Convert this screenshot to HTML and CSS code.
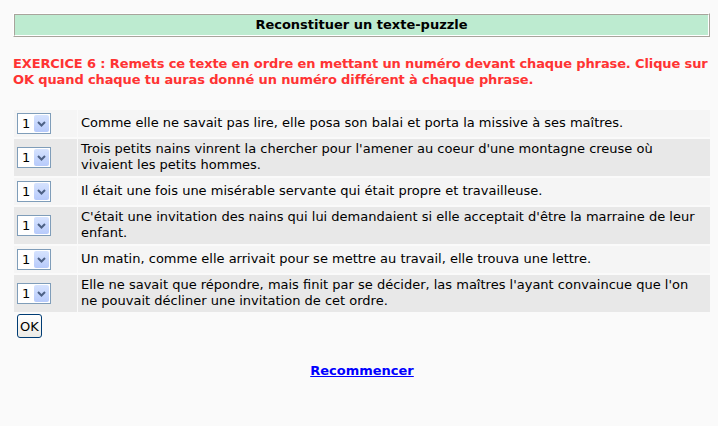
FILE: index.html
```html
<!DOCTYPE html>
<html lang="fr">
<head>
<meta charset="utf-8">
<title>Reconstituer un texte-puzzle</title>
<link rel="stylesheet" href="styles.css">
</head>
<body>
<div class="title-outer"><div class="title-cell">Reconstituer un texte-puzzle</div></div>
<p class="consigne">EXERCICE 6 : Remets ce texte en ordre en mettant un numéro devant chaque phrase. Clique sur OK quand chaque tu auras donné un numéro différent à chaque phrase.</p>
<table class="puzzle">
<tr class="light"><td class="num"><span class="sel"><span class="val">1</span><span class="btn"><svg width="9" height="6" viewBox="0 0 9 6"><path d="M1 1 L4.5 4.5 L8 1" fill="none" stroke="#4d6185" stroke-width="2"/></svg></span></span></td><td class="txt">Comme elle ne savait pas lire, elle posa son balai et porta la missive à ses maîtres.</td></tr>
<tr class="dark"><td class="num"><span class="sel"><span class="val">1</span><span class="btn"><svg width="9" height="6" viewBox="0 0 9 6"><path d="M1 1 L4.5 4.5 L8 1" fill="none" stroke="#4d6185" stroke-width="2"/></svg></span></span></td><td class="txt">Trois petits nains vinrent la chercher pour l'amener au coeur d'une montagne creuse où vivaient les petits hommes.</td></tr>
<tr class="light"><td class="num"><span class="sel"><span class="val">1</span><span class="btn"><svg width="9" height="6" viewBox="0 0 9 6"><path d="M1 1 L4.5 4.5 L8 1" fill="none" stroke="#4d6185" stroke-width="2"/></svg></span></span></td><td class="txt">Il était une fois une misérable servante qui était propre et travailleuse.</td></tr>
<tr class="dark"><td class="num"><span class="sel"><span class="val">1</span><span class="btn"><svg width="9" height="6" viewBox="0 0 9 6"><path d="M1 1 L4.5 4.5 L8 1" fill="none" stroke="#4d6185" stroke-width="2"/></svg></span></span></td><td class="txt">C'était une invitation des nains qui lui demandaient si elle acceptait d'être la marraine de leur enfant.</td></tr>
<tr class="light"><td class="num"><span class="sel"><span class="val">1</span><span class="btn"><svg width="9" height="6" viewBox="0 0 9 6"><path d="M1 1 L4.5 4.5 L8 1" fill="none" stroke="#4d6185" stroke-width="2"/></svg></span></span></td><td class="txt">Un matin, comme elle arrivait pour se mettre au travail, elle trouva une lettre.</td></tr>
<tr class="dark"><td class="num"><span class="sel"><span class="val">1</span><span class="btn"><svg width="9" height="6" viewBox="0 0 9 6"><path d="M1 1 L4.5 4.5 L8 1" fill="none" stroke="#4d6185" stroke-width="2"/></svg></span></span></td><td class="txt">Elle ne savait que répondre, mais finit par se décider, las maîtres l'ayant convaincue que l'on ne pouvait décliner une invitation de cet ordre.</td></tr>
</table>
<div class="ok-row"><button class="ok">OK</button></div>
<div class="restart"><a href="#">Recommencer</a></div>
</body>
</html>
```
FILE: styles.css
```css
html, body {
  margin: 0;
  background: #fafafa;
}
body {
  padding: 13px 4px 0 13px;
  font-family: "DejaVu Sans", Verdana, sans-serif;
  font-size: 13px;
  color: #000;
}
.title-outer {
  border: 1px solid;
  border-color: #ffffff #a8a49c #a8a49c #ffffff;
  width: 695px;
}
.title-cell {
  border: 1px solid;
  border-color: #a8a49c #ffffff #ffffff #a8a49c;
  background: #bdebd0;
  text-align: center;
  font-weight: bold;
  height: 20px;
  line-height: 20px;
}
.consigne {
  margin: 19px 0 0 0;
  color: #ff3333;
  font-weight: bold;
  font-size: 13px;
  line-height: 16px;
  letter-spacing: -0.12px;
}
.puzzle {
  border-collapse: separate;
  border-spacing: 1px 2px;
  margin: 20px 0 0 0;
  width: 698px;
}
.puzzle td {
  padding: 0;
  vertical-align: middle;
}
.light td { background: #f5f5f5; }
.dark td { background: #e8e8e8; }
.num {
  width: 60px;
  height: 27px;
  padding-left: 3px !important;
}
.txt {
  padding: 2px 3px 3px 3px !important;
  line-height: 16px;
}
.sel {
  display: flex;
  align-items: center;
  width: 32px;
  height: 19px;
  border: 1px solid #7f9db9;
  background: #fff;
  box-sizing: content-box;
}
.val {
  flex: 1;
  padding-left: 4px;
  font-size: 13px;
  line-height: 19px;
}
.btn {
  width: 15px;
  height: 17px;
  margin-right: 1px;
  border-radius: 2px;
  background: linear-gradient(#d6e3fe, #b7cafb);
  display: flex;
  align-items: center;
  justify-content: center;
}
.ok-row {
  padding: 0 0 0 4px;
}
.ok {
  font-family: "DejaVu Sans", Verdana, sans-serif;
  font-size: 13px;
  width: 25px;
  height: 24px;
  padding: 0;
  border: 1px solid #003c74;
  border-radius: 3px;
  background: linear-gradient(#ffffff, #ecebe6);
  color: #000;
}
.restart {
  width: 698px;
  text-align: center;
  margin-top: 25px;
  font-weight: bold;
}
.restart a {
  color: #0000ff;
}
```
